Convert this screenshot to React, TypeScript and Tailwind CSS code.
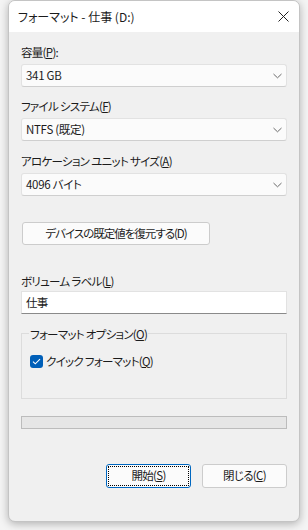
import React from 'react';

const font = { fontFamily: '"Noto Sans CJK JP", "Noto Sans", sans-serif' };

function Chevron() {
    return (
        <svg width="9" height="6" viewBox="0 0 9 6" className="text-[#6a6a6a]">
            <path d="M0.5 1 L4.5 4.8 L8.5 1" fill="none" stroke="currentColor" strokeWidth="1" />
        </svg>
    );
}

function Select({ value }: { value: string }) {
    return (
        <div className="h-[23px] flex items-center justify-between pl-[4px] pr-[4px] bg-[#fbfbfb] border border-[#e2e2e2] border-b-[#cfcfcf] rounded-[3px]">
            <span className="leading-none tracking-[-0.3px]">{value}</span>
            <Chevron />
        </div>
    );
}

function Label({ children, className = '' }: { children: React.ReactNode; className?: string }) {
    return <div className={`h-[16px] leading-[16px] ${className}`}>{children}</div>;
}

export default function App() {
    return (
        <div className="w-[308px] h-[530px] bg-[#f4f4f4] overflow-hidden text-[11.5px] tracking-[-0.7px] text-[#1b1b1b] [font-feature-settings:'palt']" style={font}>
            <div className="ml-[8px] w-[292px] h-[522px] rounded-[7px] border border-[#c4c4c4] bg-[#f0f0f0] shadow-[0_2px_8px_rgba(0,0,0,0.28)] flex flex-col overflow-hidden">
                <div className="h-[31px] bg-white flex items-center justify-between pl-[9px] pr-[10px] shrink-0">
                    <span className="text-[12px] tracking-normal">フォーマット - 仕事 (D:)</span>
                    <svg width="11" height="11" viewBox="0 0 11 11">
                        <path d="M0.5 0.5 L10.5 10.5 M10.5 0.5 L0.5 10.5" stroke="#222" strokeWidth="1" />
                    </svg>
                </div>

                <div className="flex flex-col px-[12px] pt-[12px]">
                    <Label>容量(<u>P</u>):</Label>
                    <div className="mt-[4px]"><Select value="341 GB" /></div>

                    <Label className="mt-[11px]">ファイル システム(<u>F</u>)</Label>
                    <div className="mt-[4px]"><Select value="NTFS (既定)" /></div>

                    <Label className="mt-[12px]">アロケーション ユニット サイズ(<u>A</u>)</Label>
                    <div className="mt-[4px]"><Select value="4096 バイト" /></div>

                    <button className="mt-[26px] ml-[1px] w-[188px] h-[23px] bg-[#fbfbfb] border border-[#cccccc] rounded-[3px] flex items-center justify-center tracking-[-1px]">
                        デバイスの既定値を復元する(D)
                    </button>

                    <Label className="mt-[28px]">ボリューム ラベル(<u>L</u>)</Label>
                    <div className="mt-[2px] h-[23px] bg-white border border-[#e2e2e2] border-b-[#8a8a8a] flex items-center pl-[4px]">
                        仕事
                    </div>

                    <div className="mt-[19px] relative h-[66px] border border-[#dcdcdc]">
                        <div className="absolute -top-[8px] left-[7px] px-[1px] bg-[#f0f0f0] h-[16px] leading-[16px]">
                            フォーマット オプション(<u>O</u>)
                        </div>
                        <div className="mt-[19px] ml-[8px] flex items-center gap-[3px]">
                            <div className="w-[13px] h-[13px] rounded-[3px] bg-[#005fb8] flex items-center justify-center">
                                <svg width="9" height="7" viewBox="0 0 9 7">
                                    <path d="M1 3.6 L3.3 5.8 L8 1.2" fill="none" stroke="white" strokeWidth="1.1" />
                                </svg>
                            </div>
                            <span className="leading-[16px]">クイック フォーマット(<u>Q</u>)</span>
                        </div>
                    </div>

                    <div className="mt-[17px] h-[13px] bg-[#e6e6e6] border border-[#bcbcbc]" />

                    <div className="mt-[35px] flex justify-end gap-[11px]">
                        <button className="w-[85px] h-[24px] rounded-[3px] border border-[#0067c0] bg-[#fbfbfb] p-[1px]">
                            <div className="w-full h-full border border-dotted border-black flex items-center justify-center">
                                開始(<u>S</u>)
                            </div>
                        </button>
                        <button className="w-[85px] h-[24px] rounded-[3px] border border-[#cccccc] bg-[#fbfbfb] flex items-center justify-center">
                            閉じる(<u>C</u>)
                        </button>
                    </div>
                </div>
            </div>
        </div>
    );
}
